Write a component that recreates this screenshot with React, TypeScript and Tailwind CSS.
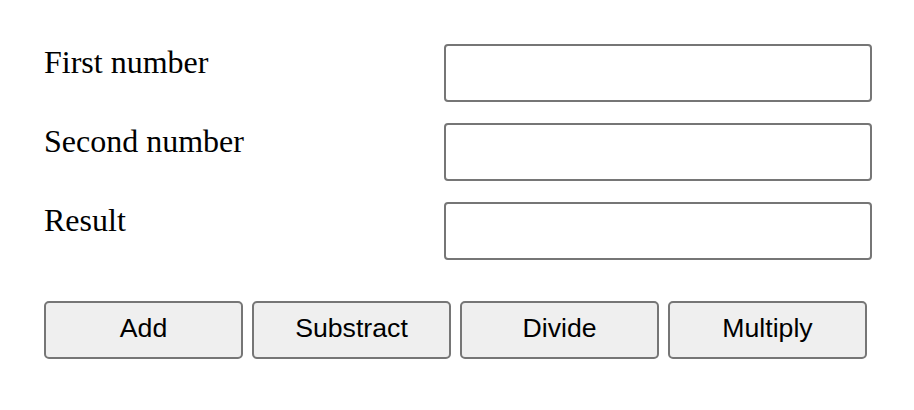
import React from "react";

export default function App() {
  const rows = ["First number", "Second number", "Result"];
  const buttons = ["Add", "Substract", "Divide", "Multiply"];
  return (
    <div className="bg-white w-[914px] h-[410px] pl-[44px] pt-[44px]">
      <div className="flex flex-col gap-[21px]">
        {rows.map((r) => (
          <div key={r} className="flex items-start">
            <label
              className="w-[400px] text-[32px] leading-[normal] text-black"
              style={{ fontFamily: '"Liberation Serif", "Times New Roman", serif' }}
            >
              {r}
            </label>
            <input
              type="text"
              className="w-[428px] h-[58px] border-2 border-[#767676] rounded-[4px] bg-white outline-none"
            />
          </div>
        ))}
      </div>
      <div className="flex gap-[9px] mt-[41px]">
        {buttons.map((b) => (
          <button
            key={b}
            className="w-[199px] h-[58px] pb-[3px] border-2 border-[#767676] rounded-[5px] bg-[#efefef] text-[26.67px] text-black leading-none"
            style={{ fontFamily: '"Liberation Sans", Arial, sans-serif' }}
          >
            {b}
          </button>
        ))}
      </div>
    </div>
  );
}
